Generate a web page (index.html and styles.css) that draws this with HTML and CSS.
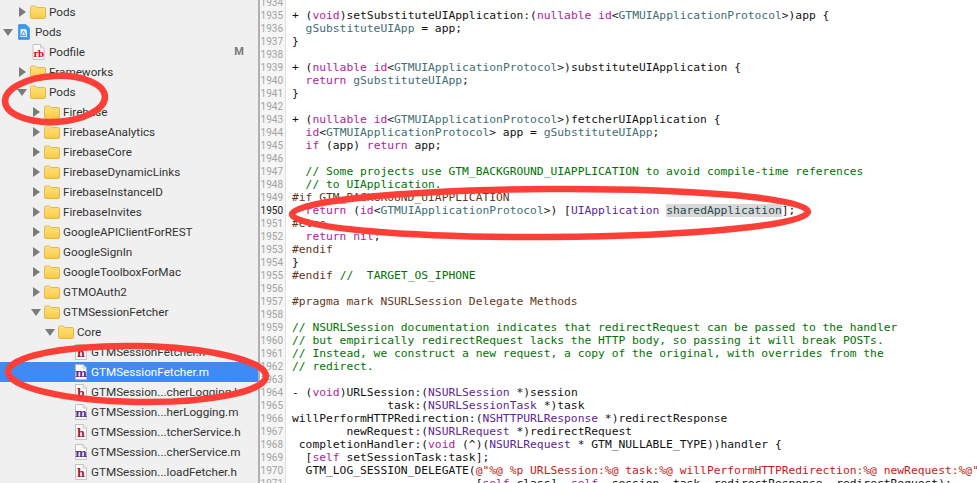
FILE: index.html
```html
<!DOCTYPE html>
<html lang="en">
<head>
<meta charset="utf-8">
<title>GTMSessionFetcher.m</title>
<link rel="stylesheet" href="styles.css">
</head>
<body>
<svg class="defs" width="0" height="0" aria-hidden="true">
  <defs>
    <linearGradient id="fold" x1="0" y1="0" x2="0" y2="1"><stop offset="0" stop-color="#fee58a"/><stop offset="1" stop-color="#fbc93f"/></linearGradient>
    <symbol id="folder" viewBox="0 0 16 14">
      <path d="M.5 2.5q0-1.500 1.500-1.500h3.500l1.500 1.500h7q1.500 0 1.500 1.500v8q0 1.500-1.500 1.500h-12q-1.500 0-1.500-1.500z" fill="url(#fold)" stroke="#e0ac35" stroke-width=".8"/>
      <path d="M.7 4h14.600" stroke="#f6d068" stroke-width=".8"/>
    </symbol>
    <symbol id="page" viewBox="0 0 12 16">
      <path d="M.5.500h7.500l3.500 3.500v11.500h-11z" fill="#fbfbfb" stroke="#b5b5b5" stroke-width=".8"/>
      <path d="M8 .500v3.500h3.500" fill="#e8e8e8" stroke="#b5b5b5" stroke-width=".6"/>
    </symbol>
    <symbol id="project" viewBox="0 0 12 16">
      <path d="M.7.700h7.300l3.300 3.300v11.300h-10.600z" fill="#3d9bef" stroke="#2a7ddb" stroke-width=".8"/>
      <path d="M2.500 5h5l1.500 1.500v6.500h-6.500z" fill="#dbeefc"/>
      <path d="M3.500 11l2-4 2 4M3 11.500h5" fill="none" stroke="#3d85d8" stroke-width=".8"/>
    </symbol>
  </defs>
</svg>

<main class="window">
  <nav class="navigator">
    <div class="row l1"><i class="arrow"></i><svg class="ico folder"><use href="#folder"/></svg><span>Pods</span></div>
    <div class="row l0"><i class="arrow open"></i><svg class="ico proj"><use href="#project"/></svg><span>Pods</span></div>
    <div class="row l1"><i class="arrow none"></i><span class="ico file rb"><svg class="pg"><use href="#page"/></svg><b>rb</b></span><span>Podfile</span><em class="badge">M</em></div>
    <div class="row l1"><i class="arrow"></i><svg class="ico folder"><use href="#folder"/></svg><span>Frameworks</span></div>
    <div class="row l1"><i class="arrow open"></i><svg class="ico folder"><use href="#folder"/></svg><span>Pods</span></div>
    <div class="row l2"><i class="arrow"></i><svg class="ico folder"><use href="#folder"/></svg><span>Firebase</span></div>
    <div class="row l2"><i class="arrow"></i><svg class="ico folder"><use href="#folder"/></svg><span>FirebaseAnalytics</span></div>
    <div class="row l2"><i class="arrow"></i><svg class="ico folder"><use href="#folder"/></svg><span>FirebaseCore</span></div>
    <div class="row l2"><i class="arrow"></i><svg class="ico folder"><use href="#folder"/></svg><span>FirebaseDynamicLinks</span></div>
    <div class="row l2"><i class="arrow"></i><svg class="ico folder"><use href="#folder"/></svg><span>FirebaseInstanceID</span></div>
    <div class="row l2"><i class="arrow"></i><svg class="ico folder"><use href="#folder"/></svg><span>FirebaseInvites</span></div>
    <div class="row l2"><i class="arrow"></i><svg class="ico folder"><use href="#folder"/></svg><span>GoogleAPIClientForREST</span></div>
    <div class="row l2"><i class="arrow"></i><svg class="ico folder"><use href="#folder"/></svg><span>GoogleSignIn</span></div>
    <div class="row l2"><i class="arrow"></i><svg class="ico folder"><use href="#folder"/></svg><span>GoogleToolboxForMac</span></div>
    <div class="row l2"><i class="arrow"></i><svg class="ico folder"><use href="#folder"/></svg><span>GTMOAuth2</span></div>
    <div class="row l2"><i class="arrow open"></i><svg class="ico folder"><use href="#folder"/></svg><span>GTMSessionFetcher</span></div>
    <div class="row l3"><i class="arrow open"></i><svg class="ico folder"><use href="#folder"/></svg><span>Core</span></div>
    <div class="row l4"><i class="arrow none"></i><span class="ico file h"><svg class="pg"><use href="#page"/></svg><b>h</b></span><span>GTMSessionFetcher.h</span></div>
    <div class="row l4 selected"><i class="arrow none"></i><span class="ico file m"><svg class="pg"><use href="#page"/></svg><b>m</b></span><span>GTMSessionFetcher.m</span></div>
    <div class="row l4"><i class="arrow none"></i><span class="ico file h"><svg class="pg"><use href="#page"/></svg><b>h</b></span><span>GTMSession...cherLogging.h</span></div>
    <div class="row l4"><i class="arrow none"></i><span class="ico file m"><svg class="pg"><use href="#page"/></svg><b>m</b></span><span>GTMSession...herLogging.m</span></div>
    <div class="row l4"><i class="arrow none"></i><span class="ico file h"><svg class="pg"><use href="#page"/></svg><b>h</b></span><span>GTMSession...tcherService.h</span></div>
    <div class="row l4"><i class="arrow none"></i><span class="ico file m"><svg class="pg"><use href="#page"/></svg><b>m</b></span><span>GTMSession...cherService.m</span></div>
    <div class="row l4"><i class="arrow none"></i><span class="ico file h"><svg class="pg"><use href="#page"/></svg><b>h</b></span><span>GTMSession...loadFetcher.h</span></div>
  </nav>

  <section class="editor">
    <div class="gutter">
      <span>1934</span><span>1935</span><span>1936</span><span>1937</span><span>1938</span><span>1939</span><span>1940</span><span>1941</span><span>1942</span><span>1943</span><span>1944</span><span>1945</span><span>1946</span><span>1947</span><span>1948</span><span>1949</span><span class="cur">1950</span><span>1951</span><span>1952</span><span>1953</span><span>1954</span><span>1955</span><span>1956</span><span>1957</span><span>1958</span><span>1959</span><span>1960</span><span>1961</span><span>1962</span><span>1963</span><span>1964</span><span>1965</span><span>1966</span><span>1967</span><span>1968</span><span>1969</span><span>1970</span><span>1971</span>
    </div>
<pre class="code"> 
+ (<a>void</a>)setSubstituteUIApplication:(<a>nullable</a> <a>id</a>&lt;<u>GTMUIApplicationProtocol</u>&gt;)app {
  <u>gSubstituteUIApp</u> = app;
}

+ (<a>nullable</a> <a>id</a>&lt;<u>GTMUIApplicationProtocol</u>&gt;)substituteUIApplication {
  <a>return</a> <u>gSubstituteUIApp</u>;
}

+ (<a>nullable</a> <a>id</a>&lt;<u>GTMUIApplicationProtocol</u>&gt;)fetcherUIApplication {
  <a>id</a>&lt;<u>GTMUIApplicationProtocol</u>&gt; app = <u>gSubstituteUIApp</u>;
  <a>if</a> (app) <a>return</a> app;

  <s>// Some projects use GTM_BACKGROUND_UIAPPLICATION to avoid compile-time references</s>
  <s>// to UIApplication.</s>
<q>#if GTM_BACKGROUND_UIAPPLICATION</q>
  <a>return</a> (<a>id</a>&lt;<u>GTMUIApplicationProtocol</u>&gt;) [<var>UIApplication</var> <mark>sharedApplication</mark>];
<q>#else</q>
  <a>return</a> <a>nil</a>;
<q>#endif</q>
}
<q>#endif</q> <s>//  TARGET_OS_IPHONE</s>

<q>#pragma mark NSURLSession Delegate Methods</q>

<s>// NSURLSession documentation indicates that redirectRequest can be passed to the handler</s>
<s>// but empirically redirectRequest lacks the HTTP body, so passing it will break POSTs.</s>
<s>// Instead, we construct a new request, a copy of the original, with overrides from the</s>
<s>// redirect.</s>

- (<a>void</a>)URLSession:(<var>NSURLSession</var> *)session
              task:(<var>NSURLSessionTask</var> *)task
willPerformHTTPRedirection:(<var>NSHTTPURLResponse</var> *)redirectResponse
        newRequest:(<var>NSURLRequest</var> *)redirectRequest
 completionHandler:(<a>void</a> (^)(<var>NSURLRequest</var> * GTM_NULLABLE_TYPE))handler {
  [<a>self</a> setSessionTask:task];
  GTM_LOG_SESSION_DELEGATE(<b>@"%@ %p URLSession:%@ task:%@ willPerformHTTPRedirection:%@ newRequest:%@"</b>
                           [<a>self</a> class], <a>self</a>, session, task, redirectResponse, redirectRequest);</pre>
  </section>

  <svg class="marks" viewBox="0 0 977 483" aria-hidden="true">
    <ellipse cx="55" cy="99" rx="50" ry="23" transform="rotate(-3 55 99)"/>
    <ellipse cx="137" cy="374" rx="129" ry="28" transform="rotate(1 137 374)"/>
    <ellipse cx="550" cy="213" rx="258" ry="24" transform="rotate(-.3 550 213)"/>
  </svg>
</main>
</body>
</html>
```

FILE: styles.css
```css
* { box-sizing: border-box; }
html, body { margin: 0; padding: 0; height: 100%; overflow: hidden; background: #fff; }
.defs { position: absolute; }
.window { position: relative; display: flex; width: 977px; height: 483px; overflow: hidden; }

.navigator {
  width: 258px;
  flex: none;
  padding-top: 2px;
  background: #f0f0f0;
  font: 11.7px/20px "Roboto", "Liberation Sans", sans-serif;
  color: #333;
}
.row { display: flex; align-items: center; height: 20px; padding-right: 14px; white-space: nowrap; }
.l0 { padding-left: 0; }
.l1 { padding-left: 14px; }
.l2 { padding-left: 28px; }
.l3 { padding-left: 42px; }
.l4 { padding-left: 56px; }
.selected { background: #3f8bf6; color: #fff; }

.arrow { flex: none; width: 14px; height: 20px; position: relative; }
.arrow::after {
  content: "";
  position: absolute;
  left: 5px;
  top: 5px;
  border-left: 7px solid #7b7b7b;
  border-top: 5px solid transparent;
  border-bottom: 5px solid transparent;
}
.arrow.open::after {
  left: 3px;
  top: 7px;
  border-top: 7px solid #7b7b7b;
  border-left: 5px solid transparent;
  border-right: 5px solid transparent;
  border-bottom: 0;
}
.arrow.none::after { display: none; }

.ico { flex: none; display: block; }
.folder { width: 16px; height: 14px; margin: 0 3px 0 2px; }
.proj { width: 12px; height: 16px; margin: 0 5px 0 4px; }
.file { position: relative; width: 12px; height: 16px; margin: 0 4px 0 5px; }
.rb { width: 13px; margin: 0 4px; }
.pg { display: block; width: 100%; height: 100%; }
.file b {
  position: absolute;
  left: 0;
  right: 0;
  bottom: 0;
  text-align: center;
  font: bold 11px/13px "DejaVu Serif", serif;
}
.rb b { color: #d0141a; font-size: 9px; line-height: 11px; letter-spacing: -.4px; }
.h b { color: #9c1c34; }
.m b { color: #5a2a96; }
.badge { margin-left: auto; font: bold 11px/20px "Roboto", sans-serif; color: #7a7a7a; }

.editor { display: flex; flex: 1; min-width: 0; border-left: 2px solid #b0b0b0; }
.gutter {
  flex: none;
  width: 26px;
  margin-top: -4px;
  padding-right: 2px;
  background: #f6f6f6;
  border-right: 1px solid #e2e2e2;
  display: flex;
  flex-direction: column;
  align-items: flex-end;
  font: 10px/13px "Roboto", sans-serif;
  color: #a3a3a3;
}
.gutter span { display: block; height: 13px; }
.gutter .cur { color: #222; }

.code {
  margin: -4px 0 0;
  padding-left: 6px;
  font: 11.3px/13px "DejaVu Sans Mono", monospace;
  color: #111;
  white-space: pre;
}
.code a { color: #b4219b; text-decoration: none; }
.code u { color: #3f6e74; text-decoration: none; }
.code var { color: #5c2699; font-style: normal; }
.code s { color: #007400; text-decoration: none; }
.code q { color: #643820; quotes: none; }
.code q::before, .code q::after { content: none; }
.code b { color: #c41a16; font-weight: 400; }
.code mark { background: #d9d9d9; color: #26474b; }

.marks { position: absolute; inset: 0; width: 100%; height: 100%; pointer-events: none; }
.marks ellipse { fill: none; stroke: #fd3f38; stroke-width: 6.5; }
```
